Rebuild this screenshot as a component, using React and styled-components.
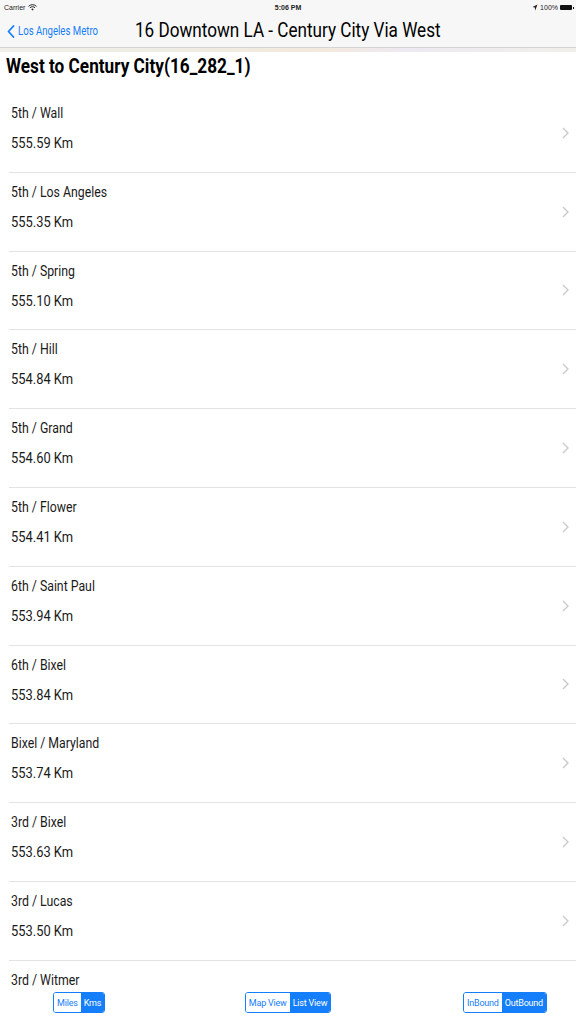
import React from 'react';
import styled, { createGlobalStyle } from 'styled-components';

const stops = [
    ['5th / Wall', '555.59'],
    ['5th / Los Angeles', '555.35'],
    ['5th / Spring', '555.10'],
    ['5th / Hill', '554.84'],
    ['5th / Grand', '554.60'],
    ['5th / Flower', '554.41'],
    ['6th / Saint Paul', '553.94'],
    ['6th / Bixel', '553.84'],
    ['Bixel / Maryland', '553.74'],
    ['3rd / Bixel', '553.63'],
    ['3rd / Lucas', '553.50'],
    ['3rd / Witmer', null],
];

const GlobalStyle = createGlobalStyle`
    html, body {
        margin: 0;
        padding: 0;
        background: #ffffff;
        font-family: "Roboto", "Liberation Sans", sans-serif;
        color: #111;
        overflow: hidden;
    }
`;

// the app font is a narrow Helvetica; Roboto squeezed sideways stands in for it
const Narrow = styled.span`
    display: inline-block;
    white-space: nowrap;
    transform: scaleX(${({ $x }) => $x || 0.82});
    transform-origin: left center;
`;

const App = () => {
    return (
        <Page>
            <GlobalStyle />
            <StatusBar>
                <StatusLeft>
                    Carrier
                    <svg width="9" height="7" viewBox="0 0 9 7">
                        <path d="M0.5 2.4 A5.5 5.5 0 0 1 8.5 2.4" stroke="#222" strokeWidth="1" fill="none" />
                        <path d="M2 3.8 A3.4 3.4 0 0 1 7 3.8" stroke="#222" strokeWidth="1" fill="none" />
                        <path d="M4.5 6.5 L3.3 5.2 A1.7 1.7 0 0 1 5.7 5.2 Z" fill="#222" />
                    </svg>
                </StatusLeft>
                <StatusTime>5:06 PM</StatusTime>
                <StatusRight>
                    <svg width="6" height="7" viewBox="0 0 6 7">
                        <path d="M5.5 0.5 L0.5 3 L2.8 3.4 L3.2 6.5 Z" fill="#222" />
                    </svg>
                    100%
                    <Battery />
                </StatusRight>
            </StatusBar>

            <NavBar>
                <BackLink>
                    <svg width="8" height="13" viewBox="0 0 8 13">
                        <path d="M6.5 1 L1.5 6.5 L6.5 12" stroke="#157efb" strokeWidth="1.8" fill="none" strokeLinecap="round" strokeLinejoin="round" />
                    </svg>
                    <Narrow $x={0.8}>Los Angeles Metro</Narrow>
                </BackLink>
                <NavTitle>
                    <Narrow $x={0.815}>16 Downtown LA - Century City Via West</Narrow>
                </NavTitle>
            </NavBar>
            <MapStrip />

            <Heading>
                <Narrow $x={0.86}>West to Century City(16_282_1)</Narrow>
            </Heading>

            <List>
                {stops.map(([name, km]) => (
                    <Row key={name}>
                        <RowText>
                            <StopName>
                                <Narrow>{name}</Narrow>
                            </StopName>
                            {km && (
                                <Distance>
                                    <Narrow $x={0.86}>{km} Km</Narrow>
                                </Distance>
                            )}
                        </RowText>
                        <Chevron>
                            <svg width="7" height="12" viewBox="0 0 7 12">
                                <path d="M1 1 L6 6 L1 11" stroke="#c7c7cc" strokeWidth="1.3" fill="none" />
                            </svg>
                        </Chevron>
                    </Row>
                ))}
            </List>

            <Toolbar>
                <Segmented $align="start">
                    <Segment>Miles</Segment>
                    <Segment active>Kms</Segment>
                </Segmented>
                <Segmented $align="center">
                    <Segment>Map View</Segment>
                    <Segment active>List View</Segment>
                </Segmented>
                <Segmented $align="end">
                    <Segment>InBound</Segment>
                    <Segment active>OutBound</Segment>
                </Segmented>
            </Toolbar>
        </Page>
    );
};

const Page = styled.div`
    display: flex;
    flex-direction: column;
    width: 576px;
    height: 1024px;
    overflow: hidden;
    background: #fff;
`;

const StatusBar = styled.div`
    display: flex;
    align-items: center;
    justify-content: space-between;
    flex-shrink: 0;
    height: 15px;
    padding: 0 4px;
    background: #f7f7f7;
    font-family: "Liberation Sans", sans-serif;
    font-size: 7px;
    color: #222;
    position: relative;
`;

const StatusLeft = styled.div`
    display: flex;
    align-items: center;
    gap: 3px;
`;

const StatusTime = styled.div`
    position: absolute;
    left: 0;
    right: 0;
    text-align: center;
    font-weight: bold;
    font-size: 7px;
`;

const StatusRight = styled.div`
    display: flex;
    align-items: center;
    gap: 2px;
`;

const Battery = styled.div`
    width: 12px;
    height: 5px;
    background: #111;
    border-radius: 1px;
    position: relative;
    &::after {
        content: '';
        position: absolute;
        right: -2px;
        top: 1.5px;
        width: 1px;
        height: 2px;
        background: #111;
    }
`;

const NavBar = styled.div`
    display: flex;
    align-items: center;
    flex-shrink: 0;
    height: 32px;
    padding: 0 0 0 7px;
    background: #f7f7f7;
    border-bottom: 1px solid #d4d4d4;
`;

const BackLink = styled.div`
    display: flex;
    align-items: center;
    gap: 3px;
    width: 128px;
    color: #157efb;
    font-size: 12px;
`;

const NavTitle = styled.div`
    font-size: 21px;
    color: #000;
    margin-top: -2px;
`;

const MapStrip = styled.div`
    flex-shrink: 0;
    height: 4px;
    background: linear-gradient(90deg, #f1efe9 0%, #efece4 30%, #f3e9dc 55%, #eee9f2 70%, #f0efea 100%);
`;

const Heading = styled.div`
    flex-shrink: 0;
    padding: 2px 6px 0;
    height: 42px;
    box-sizing: border-box;
    font-size: 20px;
    font-weight: bold;
    color: #000;
`;

const List = styled.div`
    flex: 1;
    min-height: 0;
    overflow: hidden;
    display: flex;
    flex-direction: column;
`;

const Row = styled.div`
    display: flex;
    justify-content: space-between;
    flex-shrink: 0;
    height: 78.8px;
    box-sizing: border-box;
    margin-left: 9px;
    padding-right: 7px;
    border-bottom: 1px solid #e3e3e6;
`;

const RowText = styled.div`
    display: flex;
    flex-direction: column;
    gap: 14px;
    padding: 11px 0 0 2px;
`;

const StopName = styled.div`
    font-size: 15px;
    line-height: 16px;
    color: #1a1a1a;
`;

const Distance = styled.div`
    font-size: 15px;
    line-height: 16px;
    color: #1a1a1a;
`;

const Chevron = styled.div`
    display: flex;
    align-items: center;
`;

const Toolbar = styled.div`
    flex-shrink: 0;
    height: 36px;
    box-sizing: border-box;
    padding: 4px 29px 0 29px;
    display: grid;
    grid-template-columns: 1fr 1fr 1fr;
    align-items: start;
    background: #fff;
`;

const Segmented = styled.div`
    justify-self: ${({ $align }) => $align};
    display: flex;
    height: 21px;
    border: 1px solid #157efb;
    border-radius: 3px;
    overflow: hidden;
    box-sizing: border-box;
    background: #fff;
    ${({ $align }) => $align === 'start' && 'margin-left: 24px;'}
`;

const Segment = styled.div`
    display: flex;
    align-items: center;
    justify-content: center;
    padding: 0 3px;
    font-size: 9px;
    letter-spacing: -0.2px;
    white-space: nowrap;
    color: ${({ active }) => (active ? '#fff' : '#157efb')};
    background: ${({ active }) => (active ? '#157efb' : '#fff')};
`;

export default App;
